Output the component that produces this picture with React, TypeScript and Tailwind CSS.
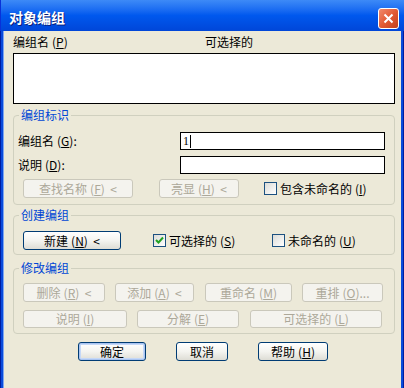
import React from "react";

const F = { fontFamily: '"Noto Sans CJK SC", "Liberation Sans", sans-serif' };

function Acc({ k }: { k: string }) {
  return (
    <span className="text-[12px] ml-[3px]">
      (<span className="underline underline-offset-1">{k}</span>)
    </span>
  );
}

function Btn({
  w,
  children,
  disabled,
  def,
  h = "h-[19px]",
}: {
  w: string;
  children: React.ReactNode;
  disabled?: boolean;
  def?: boolean;
  h?: string;
}) {
  if (disabled) {
    return (
      <div
        className={`${w} ${h} shrink-0 flex items-center justify-center rounded-[3px] border border-[#CAC8BB] bg-[#F4F3EE] text-[#ACA899] text-[12px] leading-none`}
      >
        {children}
      </div>
    );
  }
  return (
    <div
      className={`${w} ${h} shrink-0 flex items-center justify-center rounded-[3px] border border-[#003C74] bg-gradient-to-b from-white via-[#F4F4F0] to-[#DEDDD5] text-black text-[12px] leading-none ${
        def ? "shadow-[inset_0_0_0_1px_#A9C4F1,inset_0_0_0_2px_#C5D8F7]" : ""
      }`}
    >
      {children}
    </div>
  );
}

function Check({ checked }: { checked?: boolean }) {
  return (
    <div className="w-[13px] h-[13px] shrink-0 border border-[#1C5180] bg-gradient-to-br from-[#DCDCD7] to-white flex items-center justify-center">
      {checked && (
        <svg width="9" height="9" viewBox="0 0 9 9">
          <path d="M1 4 L3.5 6.5 L8 1.5" stroke="#21A121" strokeWidth="2" fill="none" />
        </svg>
      )}
    </div>
  );
}

function Group({
  title,
  className,
  children,
}: {
  title: string;
  className: string;
  children: React.ReactNode;
}) {
  return (
    <div className={`relative border border-[#D0D0BF] rounded-[4px] ${className}`}>
      <div className="absolute -top-[9px] left-[5px] bg-[#ECE9D8] px-[2px] text-[12px] leading-[16px] text-[#0046D5]">
        {title}
      </div>
      {children}
    </div>
  );
}

export default function App() {
  return (
    <div className="w-[404px] h-[388px] flex flex-col overflow-hidden" style={F}>
      {/* Title bar */}
      <div className="h-[31px] shrink-0 flex items-center justify-between pl-[8px] pr-[5px] bg-gradient-to-b from-[#3D8AF7] via-[#0058EE] to-[#0046D8] border-l border-[#0831D9]">
        <span className="text-white font-bold text-[14px] leading-none [text-shadow:1px_1px_0_#0A1E7A] mt-[2px]">
          对象编组
        </span>
        <div className="w-[21px] h-[21px] mt-[6px] rounded-[3px] border border-white bg-gradient-to-br from-[#F08A6C] via-[#E25A34] to-[#C1401C] flex items-center justify-center">
          <svg width="11" height="11" viewBox="0 0 11 11">
            <path d="M1.5 1.5 L9.5 9.5 M9.5 1.5 L1.5 9.5" stroke="white" strokeWidth="2" />
          </svg>
        </div>
      </div>
      {/* Body with frame */}
      <div className="flex-1 flex">
        <div className="w-[4px] shrink-0 flex">
          <div className="w-[1px] bg-[#001DA0]" />
          <div className="w-[2px] bg-[#0A4BDB]" />
          <div className="w-[1px] bg-[#7EA6F0]" />
        </div>
        <div className="flex-1 bg-[#ECE9D8] pl-[9px] pr-[6px] text-[12px] text-black">
          <div className="h-[22px] flex items-center leading-none">
            <span className="w-[192px]">
              编组名<Acc k="P" />
            </span>
            <span>可选择的</span>
          </div>
          <div className="h-[51px] border border-black bg-white" />

          {/* 编组标识 */}
          <Group title="编组标识" className="mt-[11px] h-[90px] pt-[16px] pl-[4px] pr-[9px]">
            <div className="flex items-center h-[18px]">
              <span className="w-[162px] leading-none">
                编组名<Acc k="G" />:
              </span>
              <div className="flex-1 h-[18px] border border-black bg-white flex items-center pl-[2px]">
                <span className="text-[12px] leading-none" style={{ fontFamily: '"Liberation Serif", serif' }}>
                  1
                </span>
                <span className="w-[1px] h-[13px] bg-black ml-[1px]" />
              </div>
            </div>
            <div className="flex items-center h-[18px] mt-[6px]">
              <span className="w-[162px] leading-none">
                说明<Acc k="D" />:
              </span>
              <div className="flex-1 h-[18px] border border-black bg-white" />
            </div>
            <div className="flex items-center mt-[5px] pl-[5px]">
              <Btn w="w-[110px]" disabled>
                查找名称<Acc k="F" />&nbsp;&nbsp;&lt;
              </Btn>
              <div className="ml-[26px]">
                <Btn w="w-[80px]" disabled>
                  亮显<Acc k="H" />&nbsp;&nbsp;&lt;
                </Btn>
              </div>
              <div className="ml-[25px] flex items-center gap-[3px]">
                <Check />
                <span className="leading-none">
                  包含未命名的<Acc k="I" />
                </span>
              </div>
            </div>
          </Group>

          {/* 创建编组 */}
          <Group title="创建编组" className="mt-[10px] h-[40px] pt-[15px] pl-[9px]">
            <div className="flex items-center">
              <Btn w="w-[98px]">
                新建<Acc k="N" />&nbsp;&nbsp;&lt;
              </Btn>
              <div className="ml-[32px] w-[119px] flex items-center gap-[3px]">
                <Check checked />
                <span className="leading-none">
                  可选择的<Acc k="S" />
                </span>
              </div>
              <div className="flex items-center gap-[3px]">
                <Check />
                <span className="leading-none">
                  未命名的<Acc k="U" />
                </span>
              </div>
            </div>
          </Group>

          {/* 修改编组 */}
          <Group title="修改编组" className="mt-[13px] h-[66px] pt-[14px] pl-[9px]">
            <div className="flex items-center">
              <Btn w="w-[82px]" disabled>
                删除<Acc k="R" />&nbsp;&nbsp;&lt;
              </Btn>
              <div className="ml-[10px]">
                <Btn w="w-[79px]" disabled>
                  添加<Acc k="A" />&nbsp;&nbsp;&lt;
                </Btn>
              </div>
              <div className="ml-[11px]">
                <Btn w="w-[87px]" disabled>
                  重命名<Acc k="M" />
                </Btn>
              </div>
              <div className="ml-[10px]">
                <Btn w="w-[81px]" disabled>
                  重排<Acc k="O" />...
                </Btn>
              </div>
            </div>
            <div className="flex items-center mt-[8px]">
              <Btn w="w-[104px]" h="h-[18px]" disabled>
                说明<Acc k="I" />
              </Btn>
              <div className="ml-[10px]">
                <Btn w="w-[102px]" h="h-[18px]" disabled>
                  分解<Acc k="E" />
                </Btn>
              </div>
              <div className="ml-[11px]">
                <Btn w="w-[132px]" h="h-[18px]" disabled>
                  可选择的<Acc k="L" />
                </Btn>
              </div>
            </div>
          </Group>

          {/* Bottom buttons */}
          <div className="flex items-center mt-[8px] pl-[65px]">
            <Btn w="w-[68px]" def>
              确定
            </Btn>
            <div className="ml-[30px]">
              <Btn w="w-[52px]">取消</Btn>
            </div>
            <div className="ml-[30px]">
              <Btn w="w-[70px]">
                帮助<Acc k="H" />
              </Btn>
            </div>
          </div>
        </div>
        <div className="w-[3px] shrink-0 flex">
          <div className="w-[2px] bg-[#0A4BDB]" />
          <div className="w-[1px] bg-[#001DA0]" />
        </div>
      </div>
    </div>
  );
}
